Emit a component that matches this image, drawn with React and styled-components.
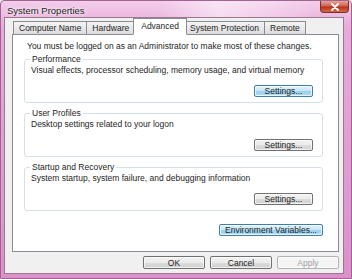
import React from "react";
import styled, { createGlobalStyle } from "styled-components";

const GlobalStyle = createGlobalStyle`
  html, body { margin: 0; padding: 0; }
  body {
    font-family: "Liberation Sans", Arial, sans-serif;
    font-size: 8.5px;
    color: #1e1e1e;
  }
  * { box-sizing: border-box; }
`;

const tabs = ["Computer Name", "Hardware", "Advanced", "System Protection", "Remote"];

const groups = [
  { title: "Performance", text: "Visual effects, processor scheduling, memory usage, and virtual memory" },
  { title: "User Profiles", text: "Desktop settings related to your logon" },
  { title: "Startup and Recovery", text: "System startup, system failure, and debugging information" },
];

const App = () => {
  return (
    <>
      <GlobalStyle />
      <Window>
        <TitleBar>
          <Title>System Properties</Title>
          <CloseButton>
            <svg width="10" height="8" viewBox="0 0 10 8">
              <path d="M2 1 L8 7 M8 1 L2 7" stroke="#fff" strokeWidth="1.8" strokeLinecap="round" />
            </svg>
          </CloseButton>
        </TitleBar>
        <Client>
          <TabRow>
            {tabs.map((t) => (
              <Tab key={t} $active={t === "Advanced"}>{t}</Tab>
            ))}
          </TabRow>
          <Panel>
            <Notice>You must be logged on as an Administrator to make most of these changes.</Notice>
            {groups.map((g) => (
              <Group key={g.title}>
                <Legend>{g.title}</Legend>
                <GroupText>{g.text}</GroupText>
                <GroupActions>
                  <Button $w={59} $focus={g.title === "Performance"}>Settings...</Button>
                </GroupActions>
              </Group>
            ))}
            <EnvRow>
              <Button $w={104} $focus>Environment Variables...</Button>
            </EnvRow>
          </Panel>
          <Footer>
            <Button $w={62} $h={13}>OK</Button>
            <Button $w={62} $h={13}>Cancel</Button>
            <Button $w={62} $h={13} disabled>Apply</Button>
          </Footer>
        </Client>
      </Window>
    </>
  );
};

export default App;

const Window = styled.div`
  width: 352px;
  height: 279px;
  display: flex;
  flex-direction: column;
  background: linear-gradient(180deg, #f3cdea 0%, #e8aadb 10%, #dc90cb 100%);
  border: 1px solid #a0628e;
  border-radius: 4px 4px 0 0;
  overflow: hidden;
`;

const TitleBar = styled.div`
  height: 16px;
  display: flex;
  justify-content: space-between;
  align-items: flex-start;
  padding-left: 6px;
  background: linear-gradient(90deg, rgba(255,255,255,0) 45%, rgba(255,255,255,0.5) 62%, rgba(255,255,255,0.25) 78%, rgba(255,255,255,0) 90%);
`;

const Title = styled.div`
  font-family: "Liberation Sans", Arial, sans-serif;
  font-size: 9.5px;
  color: #1a1a1a;
  margin-top: 4px;
  text-shadow: 0 0 4px #fff, 0 0 2px #fff;
`;

const CloseButton = styled.div`
  width: 29px;
  height: 12px;
  margin-right: 2px;
  display: flex;
  align-items: center;
  justify-content: center;
  background: linear-gradient(180deg, #e8a49a 0%, #d0624f 45%, #b8321d 55%, #d86a48 100%);
  border: 1px solid #7a3030;
  border-top: none;
  border-radius: 0 0 4px 4px;
`;

const Client = styled.div`
  flex: 1;
  margin: 0 7px 4px 3px;
  background: #f0f0f0;
  border: 1px solid #9a7890;
  display: flex;
  flex-direction: column;
  padding: 0 4px 0 7px;
`;

const TabRow = styled.div`
  display: flex;
  align-items: flex-end;
  height: 17px;
  padding-left: 1px;
  position: relative;
  z-index: 1;
  margin-bottom: -1px;
`;

const Tab = styled.div`
  height: ${(p) => (p.$active ? "17px" : "14px")};
  padding: ${(p) => (p.$active ? "2px 7px 0" : "1px 5px 0")};
  margin: ${(p) => (p.$active ? "0 -2px" : "0")};
  border: 1px solid #898c95;
  border-bottom: ${(p) => (p.$active ? "1px solid #fff" : "1px solid #898c95")};
  border-left-width: ${(p) => (p.$active ? "1px" : "0")};
  background: ${(p) => (p.$active ? "#fff" : "linear-gradient(180deg, #f4f4f4 0%, #e9e9e9 50%, #dcdcdc 100%)")};
  position: relative;
  z-index: ${(p) => (p.$active ? 2 : 1)};
  line-height: 11px;
  white-space: nowrap;
  &:first-child { border-left-width: 1px; }
`;

const Panel = styled.div`
  background: #fff;
  border: 1px solid #898c95;
  height: 218px;
  padding: 5px 15px 0 11px;
  display: flex;
  flex-direction: column;
`;

const Notice = styled.div`
  padding-left: 3px;
  height: 12px;
  line-height: 12px;
  margin-bottom: 2px;
  white-space: nowrap;
`;

const Group = styled.div`
  position: relative;
  border: 1px solid #d5dfe5;
  border-radius: 3px;
  height: 44px;
  margin-top: 5px;
  margin-bottom: 5px;
  padding: 5px 9px 0 6px;
  display: flex;
  flex-direction: column;
`;

const Legend = styled.div`
  position: absolute;
  top: -6px;
  left: 5px;
  padding: 0 2px;
  background: #fff;
  line-height: 11px;
  white-space: nowrap;
`;

const GroupText = styled.div`
  line-height: 11px;
  white-space: nowrap;
`;

const GroupActions = styled.div`
  margin-top: auto;
  margin-bottom: 5px;
  display: flex;
  justify-content: flex-end;
`;

const EnvRow = styled.div`
  display: flex;
  justify-content: flex-end;
  margin-top: 8px;
`;

const Button = styled.button`
  width: ${(p) => p.$w}px;
  height: ${(p) => p.$h || 12}px;
  padding: 0;
  font-family: "Liberation Sans", Arial, sans-serif;
  font-size: 8.5px;
  line-height: 10px;
  color: #1e1e1e;
  border: 1px solid ${(p) => (p.$focus ? "#3c7fb1" : "#707070")};
  border-radius: 2px;
  background: ${(p) =>
    p.$focus
      ? "linear-gradient(180deg, #e5f4fc 0%, #c4e5f6 50%, #98d1ef 51%, #b1dcf2 100%)"
      : "linear-gradient(180deg, #f2f2f2 0%, #ebebeb 50%, #dddddd 51%, #cfcfcf 100%)"};
  box-shadow: inset 0 0 0 1px rgba(255,255,255,0.7);
  &:disabled {
    color: #a0a0a0;
    border-color: #adb2b5;
    background: #f4f4f4;
  }
`;

const Footer = styled.div`
  flex: 1;
  display: flex;
  justify-content: flex-end;
  align-items: center;
  gap: 5px;
`;
